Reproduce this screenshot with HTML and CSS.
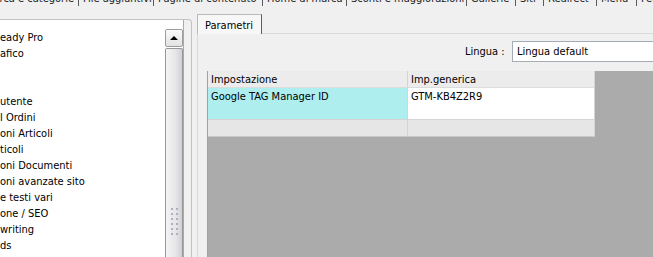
FILE: index.html
```html
<!DOCTYPE html>
<html>
<head>
    <title>Parametri</title>
    <meta charset="utf-8">
    <link rel="stylesheet" href="styles.css">
</head>
<body>
    <div class="top-tabs">
        <span class="top-tab t1"><span>Ricerca e categorie</span></span>
        <span class="top-tab t2"><span>File aggiuntivi</span></span>
        <span class="top-tab t3"><span>Pagine di contenuto</span></span>
        <span class="top-tab t4"><span>Home di marca</span></span>
        <span class="top-tab t5"><span>Sconti e maggiorazioni</span></span>
        <span class="top-tab t6"><span>Gallerie</span></span>
        <span class="top-tab t7"><span>Siti</span></span>
        <span class="top-tab t8"><span>Redirect</span></span>
        <span class="top-tab t9"><span>Menu</span></span>
        <span class="top-tab t10"><span>Feed</span></span>
    </div>
    <div class="main">
        <div class="left-pane">
            <div class="group-box">
                <div class="list-box">
                    <ul class="list-items">
                        <li>eady Pro</li>
                        <li>afico</li>
                        <li>&nbsp;</li>
                        <li>&nbsp;</li>
                        <li>utente</li>
                        <li>l Ordini</li>
                        <li>oni Articoli</li>
                        <li>ticoli</li>
                        <li>oni Documenti</li>
                        <li>oni avanzate sito</li>
                        <li>e testi vari</li>
                        <li>one / SEO</li>
                        <li>writing</li>
                        <li>ds</li>
                    </ul>
                    <div class="scrollbar">
                        <div class="scroll-btn"><span class="arrow-up"></span></div>
                        <div class="scroll-thumb">
                            <div class="grip">
                                <span></span><span></span><span></span><span></span><span></span><span></span>
                                <span></span><span></span><span></span><span></span><span></span><span></span>
                            </div>
                        </div>
                    </div>
                </div>
            </div>
        </div>
        <div class="right-pane">
            <div class="tab-header">
                <div class="tab active">Parametri</div>
                <div class="tab-rest"></div>
            </div>
            <div class="tab-page">
                <div class="lang-row">
                    <label for="lingua">Lingua :</label>
                    <div class="combo" id="lingua">Lingua default</div>
                </div>
                <div class="grid">
                    <div class="grid-table">
                        <div class="cell head">Impostazione</div>
                        <div class="cell head">Imp.generica</div>
                        <div class="cell key">Google TAG Manager ID</div>
                        <div class="cell value">GTM-KB4Z2R9</div>
                        <div class="cell new-row"></div>
                        <div class="cell new-row"></div>
                    </div>
                </div>
            </div>
        </div>
    </div>
</body>
</html>
```

FILE: styles.css
```css
* {
    box-sizing: border-box;
}

body {
    margin: 0;
    padding: 0;
    background-color: #f0f0f0;
    font-family: "DejaVu Sans Condensed", "Liberation Sans", sans-serif;
    font-size: 11px;
    color: #000;
    overflow: hidden;
    width: 653px;
    height: 257px;
}

/* tab row of the upper page control, only its bottom edge is visible */
.top-tabs {
    height: 6px;
    overflow: hidden;
    display: flex;
    white-space: nowrap;
}

.top-tab {
    display: block;
    flex: none;
    height: 6px;
    overflow: hidden;
    padding: 0 4px;
    border-right: 1px solid #5a5a5a;
    color: #222;
}

.top-tab span {
    display: block;
    line-height: 13px;
    margin-top: -8px;
}

.top-tab.t1 { width: 79px; padding-left: 0; direction: rtl; }
.top-tab.t2 { width: 75px; }
.top-tab.t3 { width: 109px; }
.top-tab.t4 { width: 84px; }
.top-tab.t5 { width: 120px; }
.top-tab.t6 { width: 49px; }
.top-tab.t7 { width: 28px; }
.top-tab.t8 { width: 53px; }
.top-tab.t9 { width: 40px; }
.top-tab.t10 { width: 16px; border-right: none; }

.main {
    display: flex;
    height: 251px;
}

.left-pane {
    width: 197px;
    flex: none;
    padding-top: 13px;
    overflow: hidden;
}

.group-box {
    margin-left: -10px;
    width: 202px;
    height: 100%;
    border-top: 1px solid #c3c3c3;
    border-right: 1px solid #c3c3c3;
    border-top-right-radius: 4px;
    padding-right: 7px;
}

.list-box {
    display: flex;
    height: 100%;
    background-color: #fff;
    border-right: 1px solid #a9a9a9;
}

.list-items {
    list-style: none;
    margin: 0;
    padding: 10px 0 0 10px;
    flex: 1;
    overflow: hidden;
}

.list-items li {
    height: 16px;
    line-height: 16px;
    white-space: nowrap;
}

.scrollbar {
    width: 18px;
    flex: none;
    padding-top: 9px;
    display: flex;
    flex-direction: column;
    gap: 1px;
}

.scroll-btn {
    height: 18px;
    border: 1px solid #9c9c9c;
    border-radius: 2px;
    background: linear-gradient(to bottom, #fbfbfb, #e2e2e2);
    display: flex;
    align-items: center;
    justify-content: center;
}

.arrow-up {
    width: 0;
    height: 0;
    border-left: 4px solid transparent;
    border-right: 4px solid transparent;
    border-bottom: 4px solid #000;
}

.scroll-thumb {
    flex: 1;
    border: 1px solid #979797;
    border-bottom: none;
    border-radius: 2px 2px 0 0;
    background: linear-gradient(to right, #f4f4f4, #e6e6ea 60%, #cfd0d6);
    padding-top: 159px;
}

.grip {
    display: grid;
    grid-template-columns: 2px 2px;
    column-gap: 3px;
    row-gap: 3px;
    justify-content: center;
}

.grip span {
    width: 2px;
    height: 2px;
    background-color: #aab0bc;
}

.right-pane {
    flex: 1;
    display: flex;
    flex-direction: column;
    padding-top: 8px;
    min-width: 0;
    overflow: hidden;
}

.tab-header {
    display: flex;
    height: 20px;
}

.tab {
    padding: 4px 6px 0 7px;
    width: 65px;
    border: 1px solid #b9b9b9;
    border-right-color: #5f5f5f;
    border-bottom: none;
    background-color: #f7f7f7;
}

.tab-rest {
    flex: 1;
    border-bottom: 1px solid #d9d9d9;
}

.tab-page {
    flex: 1;
    border-left: 1px solid #d9d9d9;
    padding: 7px 0 0 9px;
    display: flex;
    flex-direction: column;
    gap: 9px;
}

.lang-row {
    display: flex;
    align-items: center;
    padding-left: 258px;
}

.lang-row label {
    width: 47px;
    flex: none;
    white-space: nowrap;
}

.combo {
    flex: none;
    width: 220px;
    height: 21px;
    line-height: 19px;
    padding-left: 4px;
    border: 1px solid #a5acb5;
    background-color: #fff;
}

.grid {
    flex: 1;
    background-color: #ababab;
    border-left: 1px solid #a0a0a0;
}

.grid-table {
    display: grid;
    grid-template-columns: 200px 187px;
    grid-template-rows: 17px 32px 17px;
}

.cell {
    border-right: 1px solid #d4d4d4;
    border-bottom: 1px solid #d4d4d4;
    padding: 2px 3px 0;
    white-space: nowrap;
}

.cell.head {
    background-color: #ececec;
    border-bottom-color: #dcdcdc;
}

.cell.key {
    background-color: #afeeee;
}

.cell.value {
    background-color: #fff;
}

.cell.new-row {
    background-color: #e6e6e6;
    border-bottom-color: #c8c8c8;
}
```
